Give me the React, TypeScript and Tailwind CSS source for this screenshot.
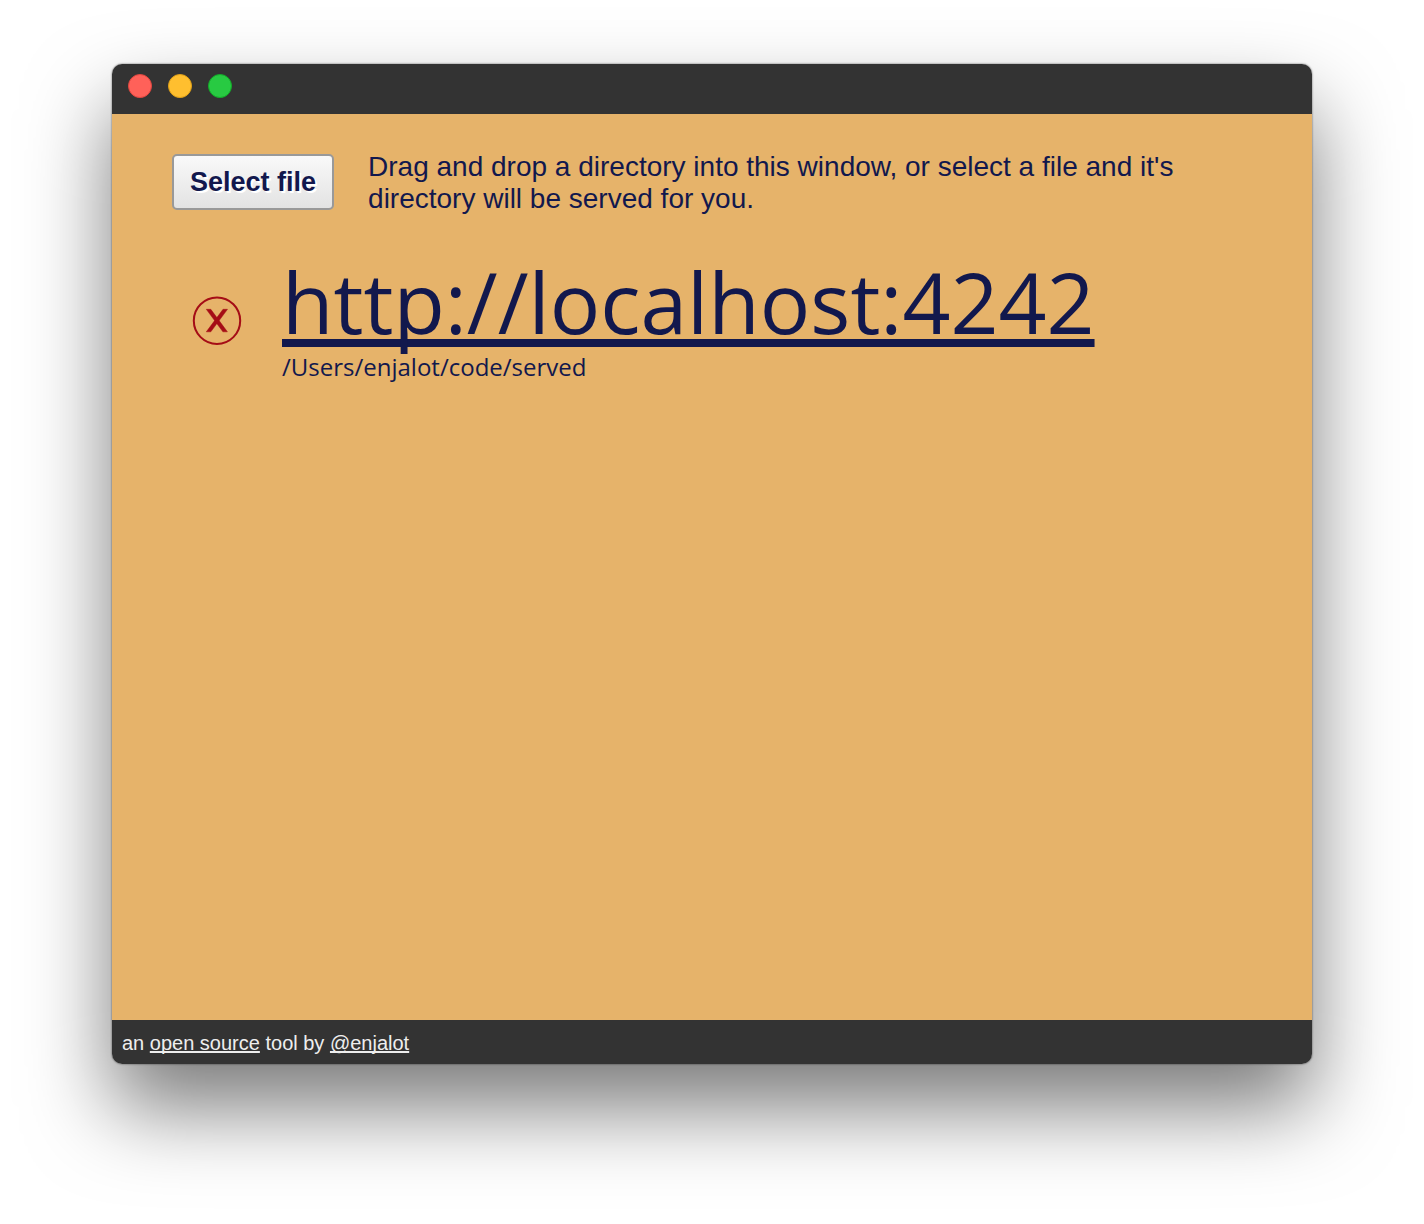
export default function App() {
  return (
    <div className="flex min-h-screen flex-col bg-white px-28 pt-16 pb-40 font-['Liberation_Sans',Arial,sans-serif] text-[#12184d]">
      <div className="flex flex-1 flex-col rounded-[10px] shadow-[0_0_2px_rgba(0,0,0,0.65),0_44px_84px_rgba(0,0,0,0.52)]">
        <header className="flex h-[50px] items-start gap-4 rounded-t-[10px] bg-[#333333] px-4 pt-[10px]">
          <button aria-label="Close" className="size-6 rounded-full border border-[#e2463f] bg-[#ff6159]" />
          <button aria-label="Minimize" className="size-6 rounded-full border border-[#e1a116] bg-[#ffbf2f]" />
          <button aria-label="Zoom" className="size-6 rounded-full border border-[#12ac28] bg-[#28ca42]" />
        </header>
        <main className="flex-1 bg-[#e6b36a] px-15 pt-[37px]">
          <div className="flex items-start gap-[34px]">
            <button className="mt-[3px] h-14 shrink-0 rounded-[5px] border-2 border-[#999999] bg-linear-to-b from-[#f9f9f9] to-[#e3e3e3] px-4 text-[27px] font-bold [text-shadow:2px_2px_0_#ffffff]">
              Select file
            </button>
            <p className="max-w-[840px] text-[28px] leading-8">
              Drag and drop a directory into this window, or select a file and it's directory will be served for you.
            </p>
          </div>
          <div className="mt-9 flex items-start gap-10 pl-5 font-['Open_Sans',sans-serif]">
            <button aria-label="Stop server" className="mt-[45px] size-[50px] shrink-0 text-[#a50d16]">
              <svg viewBox="0 0 50 50" className="size-full" fill="none" stroke="currentColor" aria-hidden="true">
                <circle cx="25" cy="24.7" r="23.2" strokeWidth="2" />
                <path
                  d="M14.3 13.3h4.5L35.4 35.8h-4.5zM31 13.3h4.5L18.8 35.8h-4.5z"
                  fill="currentColor"
                  strokeWidth="0.5"
                />
              </svg>
            </button>
            <div>
              <a
                href="http://localhost:4242"
                className="block text-[84px] leading-[102px] underline [text-decoration-skip-ink:none]"
              >
                http://localhost:4242
              </a>
              <p className="text-2xl leading-7">/Users/enjalot/code/served</p>
            </div>
          </div>
        </main>
        <footer className="h-11 rounded-b-[10px] bg-[#333333] px-[10px] text-xl leading-[46px] text-[#eeeeee]">
          an <a href="#source" className="underline decoration-2 [text-decoration-skip-ink:none]">open source</a> tool by{" "}
          <a href="#enjalot" className="underline decoration-2 [text-decoration-skip-ink:none]">@enjalot</a>
        </footer>
      </div>
    </div>
  );
}
